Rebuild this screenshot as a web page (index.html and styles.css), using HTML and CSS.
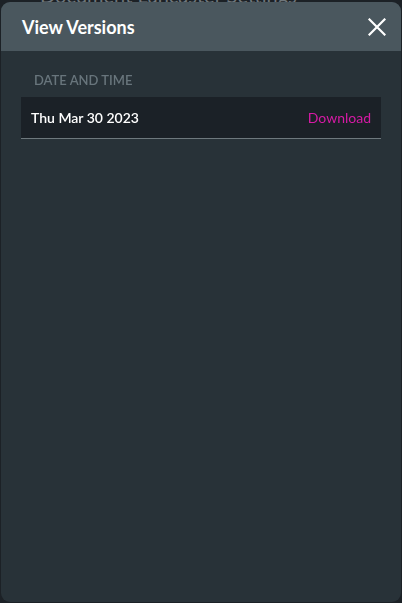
FILE: index.html
```html
<!DOCTYPE html>
<html lang="en">
<head>
<meta charset="utf-8">
<title>View Versions</title>
<link rel="stylesheet" href="styles.css">
</head>
<body>
<div class="backdrop">
  <div class="page-title">Document Lancaster Settings</div>
</div>
<div class="modal">
  <div class="modal-header">
    <h1 class="modal-title">View Versions</h1>
    <button class="close-btn" aria-label="Close">
      <svg width="18" height="18" viewBox="0 0 18 18"><path d="M1.5 1.5 L16.5 16.5 M16.5 1.5 L1.5 16.5" stroke="#ffffff" stroke-width="2.2" stroke-linecap="square" fill="none"/></svg>
    </button>
  </div>
  <div class="modal-body">
    <div class="col-label">DATE AND TIME</div>
    <div class="version-row">
      <span class="version-date">Thu Mar 30 2023</span>
      <a class="download-link" href="#">Download</a>
    </div>
  </div>
</div>
</body>
</html>
```
FILE: styles.css
```css
html, body {
  margin: 0;
  padding: 0;
  height: 100%;
}
body {
  background: #1c2126;
  font-family: Lato, "Noto Sans", sans-serif;
  overflow: hidden;
}
.backdrop {
  height: 100%;
  background: #1c2126;
}
.page-title {
  color: #6f767b;
  font-size: 20px;
  line-height: 20px;
  margin-top: -15px;
  padding-left: 40px;
}
.modal {
  position: fixed;
  left: 1px;
  top: 2px;
  width: 400px;
  height: 600px;
  background: #283238;
  border-radius: 9px;
  overflow: hidden;
  display: flex;
  flex-direction: column;
}
.modal-header {
  height: 49px;
  background: #4a575e;
  display: flex;
  align-items: center;
  justify-content: space-between;
  padding: 0 15px 0 21px;
  flex-shrink: 0;
}
.modal-title {
  margin: 0;
  color: #ffffff;
  font-size: 18px;
  font-weight: 700;
  line-height: 1;
  padding-top: 1px;
}
.close-btn {
  background: none;
  border: 0;
  padding: 0;
  width: 18px;
  height: 18px;
  display: flex;
  cursor: pointer;
}
.modal-body {
  padding: 21px 20px 0 20px;
}
.col-label {
  color: #68757c;
  font-size: 13px;
  font-weight: 600;
  line-height: 17px;
  padding-left: 13px;
  margin-bottom: 8px;
}
.version-row {
  height: 41px;
  background: #1b2127;
  border-bottom: 1px solid #6e787d;
  display: flex;
  align-items: center;
  justify-content: space-between;
  padding: 0 10px 0 10px;
}
.version-date {
  color: #ffffff;
  font-size: 14px;
  font-weight: 600;
}
.download-link {
  color: #d61aa5;
  font-size: 14px;
  text-decoration: none;
}
```
